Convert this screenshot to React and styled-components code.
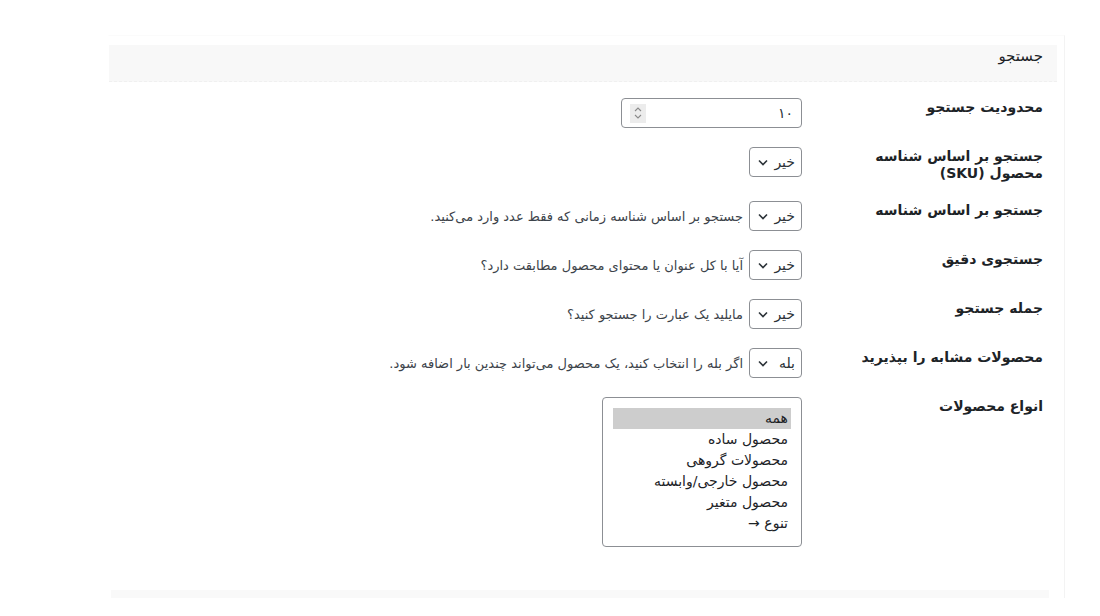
import React from 'react';
import styled, { createGlobalStyle } from 'styled-components';

const Global = createGlobalStyle`
  html, body {
    margin: 0;
    padding: 0;
    background: #fff;
  }
  body {
    font-family: "DejaVu Sans", "Noto Sans", sans-serif;
    color: #1d2327;
  }
`;

const Page = styled.div`
  direction: rtl;
  width: 1100px;
  height: 616px;
  overflow: hidden;
  padding: 35px 35px 0 108px;
  box-sizing: border-box;
`;

const Panel = styled.div`
  border-left: 1px solid #fff;
  border-right: 1px solid #f3f3f3;
  border-top: 1px solid #fbfbfb;
  padding: 9px 7px 0 0;
  height: 563px;
  box-sizing: border-box;
  display: flex;
  flex-direction: column;
`;

const Header = styled.div`
  background: #f8f8f8;
  height: 37px;
  box-sizing: border-box;
  padding: 2px 14px 0 0;
  border-bottom: 1px dashed #f0f0f0;
  font-size: 15px;
  font-weight: 500;
  color: #1d2327;
  line-height: 18px;
`;

const Table = styled.div`
  margin-top: 6px;
  display: flex;
  flex-direction: column;
  flex: 1;
`;

const Row = styled.div`
  display: grid;
  grid-template-columns: 241px 1fr;
  padding: 10px 14px 9px 0;
`;

const Label = styled.div`
  font-size: 14px;
  font-weight: 700;
  line-height: 17px;
  color: #1d2327;
  padding-top: 1px;
  max-width: 185px;
`;

const Field = styled.div`
  display: flex;
  align-items: center;
  gap: 6px;
  align-self: start;
`;

const Desc = styled.span`
  font-size: 13px;
  color: #3c434a;
  white-space: nowrap;
`;

const Box = styled.div`
  height: 30px;
  box-sizing: border-box;
  border: 1px solid #8c8f94;
  border-radius: 4px;
  background: #fff;
  display: flex;
  align-items: center;
  font-size: 14px;
  color: #2c3338;
`;

const NumberBox = styled(Box)`
  width: 181px;
  justify-content: space-between;
  padding: 0 8px 0 8px;
`;

const Spinner = styled.span`
  width: 16px;
  height: 19px;
  background: #ececec;
  display: flex;
  align-items: center;
  justify-content: center;
`;

const SelectBox = styled(Box)`
  width: 53px;
  justify-content: space-between;
  padding: 0 6px 0 8px;
`;

const ListBox = styled.div`
  width: 200px;
  height: 150px;
  box-sizing: border-box;
  border: 1px solid #8c8f94;
  border-radius: 4px;
  padding: 10px 10px 0 10px;
`;

const Option = styled.div`
  font-size: 14px;
  line-height: 21px;
  padding-right: 3px;
  color: #1d2327;
  background: ${p => (p.$selected ? '#cdcdcd' : 'transparent')};
`;

const Footer = styled.div`
  margin: 0 8px 0 2px;
  height: 8px;
  background: #f9f9f9;
`;

const Chevron = () => (
  <svg width="10" height="7" viewBox="0 0 10 7">
    <path d="M1 1.5 L5 5.5 L9 1.5" fill="none" stroke="#2c3338" strokeWidth="1.6" />
  </svg>
);

const SpinIcon = () => (
  <svg width="8" height="14" viewBox="0 0 8 14">
    <path d="M1 5 L4 2 L7 5" fill="none" stroke="#8a8a8a" strokeWidth="1.1" />
    <path d="M1 9 L4 12 L7 9" fill="none" stroke="#8a8a8a" strokeWidth="1.1" />
  </svg>
);

const Select = ({ value }) => (
  <SelectBox>
    <span>{value}</span>
    <Chevron />
  </SelectBox>
);

const rows = [
  { label: 'جستجو بر اساس شناسه محصول (SKU)', value: 'خیر' },
  { label: 'جستجو بر اساس شناسه', value: 'خیر', desc: 'جستجو بر اساس شناسه زمانی که فقط عدد وارد می‌کنید.' },
  { label: 'جستجوی دقیق', value: 'خیر', desc: 'آیا با کل عنوان یا محتوای محصول مطابقت دارد؟' },
  { label: 'جمله جستجو', value: 'خیر', desc: 'مایلید یک عبارت را جستجو کنید؟' },
  { label: 'محصولات مشابه را بپذیرید', value: 'بله', desc: 'اگر بله را انتخاب کنید، یک محصول می‌تواند چندین بار اضافه شود.' },
];

const types = ['همه', 'محصول ساده', 'محصولات گروهی', 'محصول خارجی/وابسته', 'محصول متغیر', 'تنوع →'];

export default function App() {
  return (
    <Page>
      <Global />
      <Panel>
        <Header>جستجو</Header>
        <Table>
          <Row>
            <Label>محدودیت جستجو</Label>
            <Field>
              <NumberBox>
                <span>۱۰</span>
                <Spinner><SpinIcon /></Spinner>
              </NumberBox>
            </Field>
          </Row>
          {rows.map(r => (
            <Row key={r.label}>
              <Label>{r.label}</Label>
              <Field>
                <Select value={r.value} />
                {r.desc && <Desc>{r.desc}</Desc>}
              </Field>
            </Row>
          ))}
          <Row>
            <Label>انواع محصولات</Label>
            <Field>
              <ListBox>
                {types.map((t, i) => (
                  <Option key={t} $selected={i === 0}>{t}</Option>
                ))}
              </ListBox>
            </Field>
          </Row>
        </Table>
        <Footer />
      </Panel>
    </Page>
  );
}
